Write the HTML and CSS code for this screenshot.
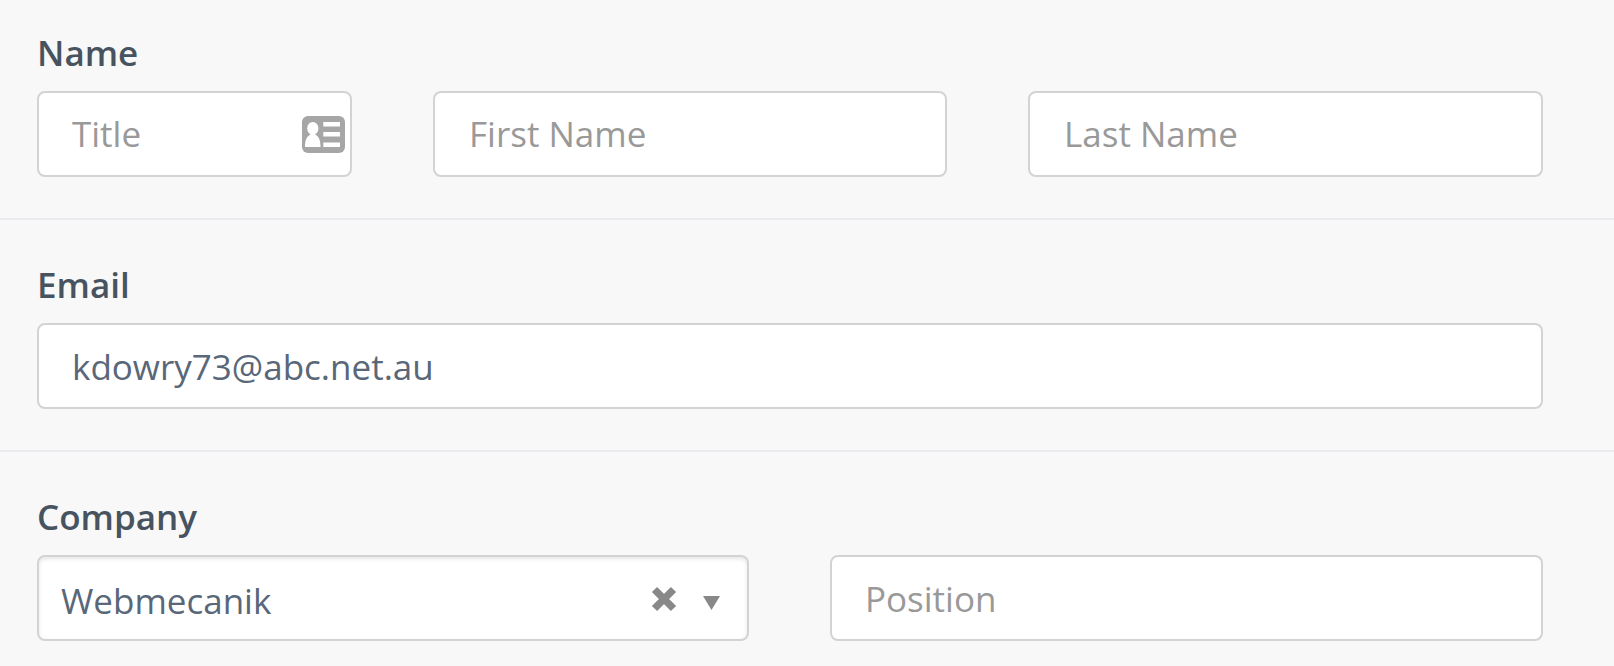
FILE: index.html
```html
<!DOCTYPE html>
<html lang="en">
<head>
<meta charset="utf-8">
<title>Contact</title>
<link rel="stylesheet" href="styles.css">
</head>
<body>
<form class="form">
  <section class="group group-first">
    <label class="label" for="title">Name</label>
    <div class="row row-name">
      <div class="control">
        <input class="input input-title" id="title" type="text" placeholder="Title">
        <svg class="card-icon" width="43" height="37" viewBox="0 0 43 37">
          <rect width="43" height="37" rx="6" fill="#a6a6a6"/>
          <g fill="#fff">
            <ellipse cx="10.800" cy="12.400" rx="5.600" ry="6.400"/>
            <path d="M8.500 16h4.600v2.600c3.600 1.600 5.400 5.400 5.400 12.400H3c0-7 1.900-10.800 5.500-12.400z"/>
            <path d="M21.300 6h16.700v4.600H21.300zM21.300 16h16.700v4.600H21.300zM21.300 26.400h16.700v4.600H21.300z"/>
          </g>
        </svg>
      </div>
      <input class="input" type="text" placeholder="First Name">
      <input class="input" type="text" placeholder="Last Name">
    </div>
  </section>
  <section class="group">
    <label class="label" for="email">Email</label>
    <div class="row">
      <input class="input input-email" id="email" type="text" value="kdowry73@abc.net.au">
    </div>
  </section>
  <section class="group">
    <span class="label">Company</span>
    <div class="row row-company">
      <div class="select">
        <span class="select-text">Webmecanik</span>
        <svg class="clear" width="26" height="26" viewBox="0 0 26 26"><path d="M3.500 3.500l19 19M22.500 3.500l-19 19" stroke="#888" stroke-width="7.400" fill="none"/></svg>
        <svg class="arrow" width="17" height="14" viewBox="0 0 17 14"><path d="M0 0h17L8.500 14z" fill="#888"/></svg>
      </div>
      <input class="input input-position" type="text" placeholder="Position">
    </div>
  </section>
</form>
</body>
</html>
```
FILE: styles.css
```css
* { box-sizing: border-box; }

body {
  margin: 0;
  height: 666px;
  overflow: hidden;
  background: #f8f8f8;
  color: #596779;
  font-family: "Open Sans", "Noto Sans", sans-serif;
  font-size: 35px;
}

.group {
  height: 232px;
  padding: 40px 71px 0 37px;
  border-bottom: 2px solid #ebebef;
}

.group-first {
  height: 220px;
  padding-top: 28px;
}

.label {
  display: block;
  height: 63px;
  line-height: 50px;
  font-weight: 600;
  color: #47535f;
}

.row { display: grid; }
.row-name { grid-template-columns: 315px 514px 515px; column-gap: 81px; }
.row-company { grid-template-columns: 712px 713px; column-gap: 81px; }

.control { display: grid; position: relative; }

.input,
.select {
  width: 100%;
  height: 86px;
  border: 2px solid #d3d3d3;
  border-radius: 8px;
  background: #fff;
  color: inherit;
  font: inherit;
}

.input {
  padding: 0 34px;
  outline: none;
}

.input::placeholder { color: #999; opacity: 1; }

.row-name .input { padding-bottom: 2px; }

.input-title,
.input-email,
.input-position { padding-left: 33px; }

.card-icon {
  position: absolute;
  right: 7px;
  top: 25px;
}

.select {
  display: flex;
  align-items: center;
  padding: 4px 27px 0 22px;
  box-shadow: inset 0 2px 4px rgba(0, 0, 0, .1);
}

.select-text { flex: 1; }
.clear { margin: 0 26px 2px 0; }
.arrow { margin-top: 6px; }
```
